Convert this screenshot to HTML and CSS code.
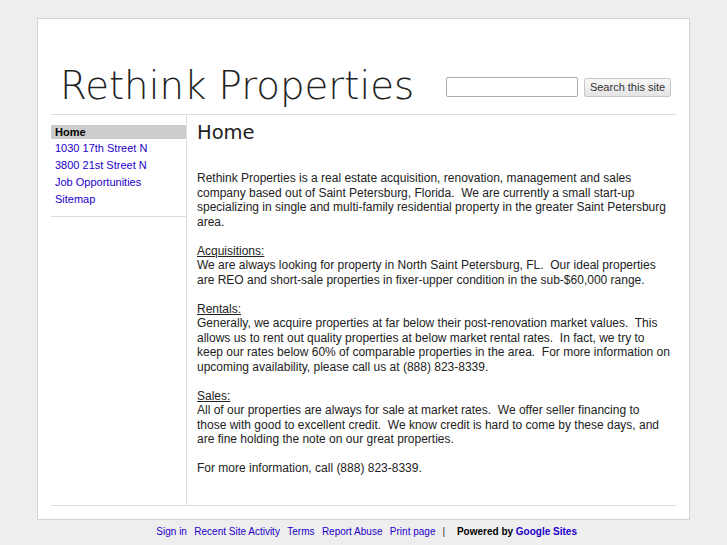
FILE: index.html
```html
<!DOCTYPE html>
<html>
<head>
<meta charset="utf-8">
<title>Rethink Properties</title>
<link rel="stylesheet" href="styles.css">
</head>
<body>
<div class="page">
  <div class="header">
    <h1 class="site-title">Rethink Properties</h1>
    <div class="search">
      <input class="search-input" type="text">
      <button class="search-btn">Search this site</button>
    </div>
  </div>
  <div class="body">
    <div class="sidebar">
      <ul class="nav">
        <li class="current">Home</li>
        <li><a href="#">1030 17th Street N</a></li>
        <li><a href="#">3800 21st Street N</a></li>
        <li><a href="#">Job Opportunities</a></li>
        <li><a href="#">Sitemap</a></li>
      </ul>
    </div>
    <div class="main">
      <h2 class="page-title">Home</h2>
      <div class="content">
        <p>Rethink Properties is a real estate acquisition, renovation, management and sales company based out of Saint Petersburg, Florida.&nbsp; We are currently a small start-up specializing in single and multi-family residential property in the greater Saint Petersburg area.</p>
        <p><u>Acquisitions:</u><br>We are always looking for property in North Saint Petersburg, FL.&nbsp; Our ideal properties are REO and short-sale properties in fixer-upper condition in the sub-$60,000 range.</p>
        <p><u>Rentals:</u><br>Generally, we acquire properties at far below their post-renovation market values.&nbsp; This allows us to rent out quality properties at below market rental rates.&nbsp; In fact, we try to keep our rates below 60% of comparable properties in the area.&nbsp; For more information on upcoming availability, please call us at (888) 823-8339.</p>
        <p><u>Sales:</u><br>All of our properties are always for sale at market rates.&nbsp; We offer seller financing to those with good to excellent credit.&nbsp; We know credit is hard to come by these days, and are fine holding the note on our great properties.</p>
        <p>For more information, call (888) 823-8339.</p>
      </div>
    </div>
  </div>
</div>
<div class="footer">
  <a href="#">Sign in</a>
  <a href="#">Recent Site Activity</a>
  <a href="#">Terms</a>
  <a href="#">Report Abuse</a>
  <a href="#">Print page</a>
  <span class="sep">|</span>
  <span class="powered">Powered by <a href="#">Google Sites</a></span>
</div>
</body>
</html>
```

FILE: styles.css
```css
html, body {
  margin: 0;
  padding: 0;
}
body {
  background: #eeeeee;
  font-family: "Liberation Sans", Arial, sans-serif;
  color: #222;
  padding-top: 18px;
}
.page {
  margin-left: 37px;
  width: 625px;
  height: 500px;
  background: #fff;
  border: 1px solid #d4d4d4;
  padding: 0 13px;
  display: flex;
  flex-direction: column;
}
.header {
  height: 95px;
  display: flex;
  align-items: flex-end;
  justify-content: space-between;
  border-bottom: 1px solid #dddddd;
}
.site-title {
  margin: 0 0 1px 9px;
  font-family: "DejaVu Sans", sans-serif;
  font-weight: 200;
  font-size: 38.7px;
  line-height: 54px;
  color: #222;
}
.search {
  display: flex;
  align-items: center;
  gap: 6px;
  margin: 0 5px 17px 0;
}
.search-input {
  width: 130px;
  height: 18px;
  border: 1px solid #aaa;
  border-radius: 2px;
  padding: 0;
  margin: 0;
}
.search-btn {
  height: 19px;
  width: 87px;
  padding: 0;
  margin: 0;
  font-family: "Liberation Sans", Arial, sans-serif;
  font-size: 11px;
  color: #333;
  background: linear-gradient(#f8f8f8, #e4e4e4);
  border: 1px solid #c8c8c8;
  border-radius: 2px;
}
.body {
  display: flex;
  flex: 1;
  border-bottom: 1px solid #dddddd;
  margin-bottom: 13px;
}
.sidebar {
  width: 135px;
  border-right: 1px solid #dddddd;
}
.nav {
  list-style: none;
  margin: 10px 0 0 0;
  padding: 0 0 8px 0;
  border-bottom: 1px solid #dddddd;
  font-size: 11px;
}
.nav li {
  height: 17px;
  line-height: 17px;
  padding-left: 4px;
}
.nav li.current {
  height: 14px;
  line-height: 14px;
  margin-bottom: 1px;
  background: #cccccc;
  font-weight: bold;
  color: #000;
  font-size: 11px;
}
.nav a {
  color: #2200cc;
  text-decoration: none;
}
.main {
  flex: 1;
  padding-left: 10px;
  padding-right: 5px;
}
.page-title {
  margin: 4px 0 0 0;
  font-family: "DejaVu Sans", sans-serif;
  font-weight: normal;
  font-size: 19.5px;
  line-height: 28px;
  color: #222;
}
.content {
  margin-top: 24px;
  font-size: 12px;
  line-height: 14.5px;
  color: #222;
}
.content p {
  margin: 0 0 14.5px 0;
}
.footer {
  text-align: center;
  font-size: 10px;
  margin-top: 6px;
  margin-left: 37px;
  padding-left: 4px;
  width: 649px;
}
.footer a {
  color: #2200cc;
  text-decoration: none;
  margin: 0 2.3px;
}
.footer .sep {
  color: #333;
  margin: 0 9px 0 2px;
}
.footer .powered {
  font-weight: bold;
  color: #000;
}
.footer .powered a {
  margin: 0;
}
```
